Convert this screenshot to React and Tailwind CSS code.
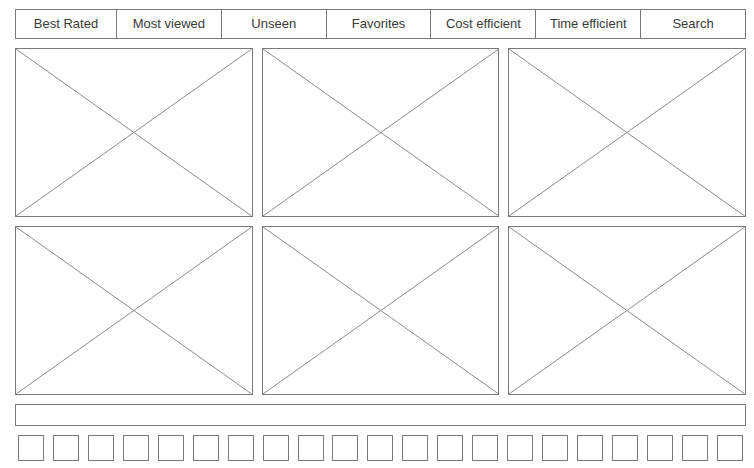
import React from 'react';

const tabs = ['Best Rated', 'Most viewed', 'Unseen', 'Favorites', 'Cost efficient', 'Time efficient', 'Search'];

const Placeholder = () => (
    <div className="relative h-[169px] border border-[#7a7a7a] bg-white">
        <svg className="absolute inset-0 h-full w-full" preserveAspectRatio="none" viewBox="0 0 100 100">
            <line x1="0" y1="0" x2="100" y2="100" stroke="#8a8a8a" strokeWidth="1" vectorEffect="non-scaling-stroke" />
            <line x1="100" y1="0" x2="0" y2="100" stroke="#8a8a8a" strokeWidth="1" vectorEffect="non-scaling-stroke" />
        </svg>
    </div>
);

const App = () => {
    return (
        <div className="min-h-[468px] w-[754px] bg-white" style={{ fontFamily: '"Liberation Sans", Arial, sans-serif' }}>
            <div className="ml-[15px] flex w-[731px] flex-col gap-[9px] pt-[9px]">
                <div className="flex h-[30px] border border-[#7a7a7a]">
                    {tabs.map((tab, i) => (
                        <div
                            key={tab}
                            className={
                                i === 0
                                    ? 'flex w-[100px] shrink-0 items-center justify-center text-[13px] text-[#3a3a3a]'
                                    : 'flex flex-1 items-center justify-center border-l border-[#7a7a7a] text-[13px] text-[#3a3a3a]'
                            }
                        >
                            {tab}
                        </div>
                    ))}
                </div>

                <div className="grid grid-cols-3 gap-x-[9px] gap-y-[9px]">
                    {Array.from({ length: 6 }).map((_, i) => (
                        <Placeholder key={i} />
                    ))}
                </div>

                <div className="h-[22px] border border-[#7a7a7a]" />

                <div className="flex justify-between px-[3px]">
                    {Array.from({ length: 21 }).map((_, i) => (
                        <div key={i} className="h-[26px] w-[26px] border border-[#7a7a7a]" />
                    ))}
                </div>
            </div>
        </div>
    );
};

export default App;
